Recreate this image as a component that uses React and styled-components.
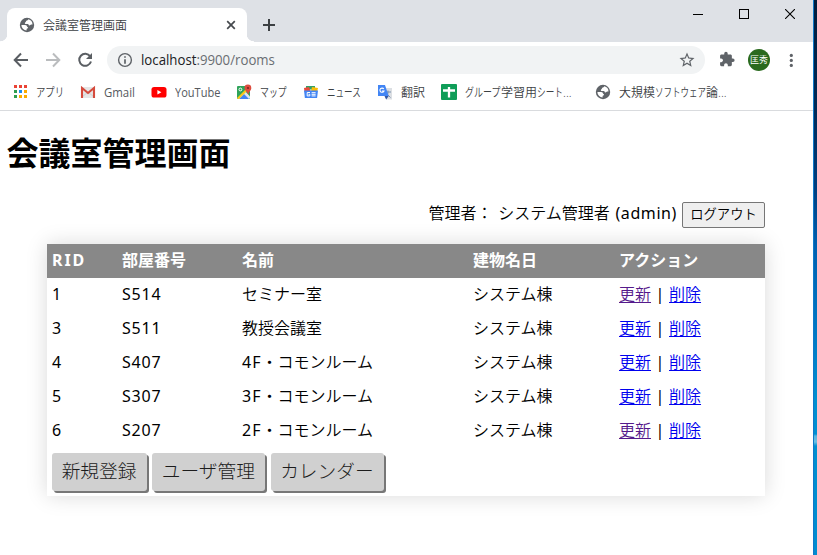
import React from "react";
import styled, { createGlobalStyle } from "styled-components";

const GlobalStyle = createGlobalStyle`
  * { box-sizing: border-box; }
  html, body { margin: 0; padding: 0; overflow: hidden; background: #fff; }
`;

const uiFont = `"Open Sans", "Noto Sans CJK JP", sans-serif`;

const Screen = styled.div`
  display: flex;
  width: 817px;
  height: 555px;
  overflow: hidden;
`;
const Browser = styled.div`
  flex: 1;
  min-width: 0;
  display: flex;
  flex-direction: column;
  background: #fff;
`;
const Desktop = styled.div`
  width: 4px;
  border-left: 1px solid #1078c8;
  background: linear-gradient(#001c3c 0, #002a58 110px, #003f80 190px, #0060b0 245px, #0078c4 330px, #0090d0 400px, #008fd2 434px, #55b5e0 436px, #6cc0e4 442px, #0090d0 446px, #008cd0 100%);
`;
const TabStrip = styled.div`
  height: 42px;
  display: flex;
  align-items: flex-end;
  background: #dee1e6;
`;
const Flare = styled.div`
  width: 7px;
  height: 8px;
  background: radial-gradient(circle at ${(p) => (p.$right ? "100% 0" : "0 0")}, transparent 7px, #fff 7.6px);
`;
const Tab = styled.div`
  width: 240px;
  height: 34px;
  display: flex;
  align-items: center;
  padding: 0 11px 0 12px;
  background: #fff;
  border-radius: 8px 8px 0 0;
`;
const TabTitle = styled.span`
  flex: 1;
  margin-left: 8px;
  padding-top: 2px;
  font: 350 12px/16px ${uiFont};
  color: #3c4043;
`;
const NewTab = styled.div`
  height: 34px;
  display: flex;
  align-items: center;
  margin-left: 8px;
`;
const WindowControls = styled.div`
  align-self: flex-start;
  display: flex;
  gap: 36px;
  margin: 9px 18px 0 auto;
`;
const Toolbar = styled.div`
  height: 36px;
  display: flex;
  align-items: center;
  padding-left: 12px;
`;
const NavIcons = styled.div`
  display: flex;
  gap: 14px;
  width: 95px;
`;
const AddressBar = styled.div`
  width: 598px;
  height: 28px;
  display: flex;
  align-items: center;
  padding: 0 9px 0 9px;
  border-radius: 14px;
  background: #f1f3f4;
`;
const Address = styled.span`
  flex: 1;
  margin-left: 7px;
  font: 14px/20px ${uiFont};
  transform: scaleX(0.945);
  transform-origin: left center;
  color: #6a6e73;
  b { font-weight: 400; color: #202124; }
`;
const ToolbarActions = styled.div`
  display: flex;
  align-items: center;
  margin-left: 13px;
`;
const Avatar = styled.div`
  width: 22px;
  height: 22px;
  display: flex;
  align-items: center;
  justify-content: center;
  margin: 0 13px 0 12px;
  border-radius: 50%;
  background: #2a6a1e;
  color: #fff;
  font: 9px/22px ${uiFont};
`;
const Bookmarks = styled.div`
  height: 33px;
  display: flex;
  align-items: center;
  padding: 0 0 4px 12px;
  border-bottom: 1px solid #d9dbde;
`;
const Bookmark = styled.div`
  width: ${(p) => p.$width}px;
  flex: none;
  display: flex;
  align-items: center;
  gap: 8px;
`;
const BookmarkLabel = styled.span`
  flex: none;
  white-space: nowrap;
  padding-top: 2px;
  font: ${(p) => (p.$latin ? 400 : 350)} 12px/16px ${uiFont};
  color: ${(p) => (p.$latin ? "#55595e" : "#3c4043")};
  transform: scaleX(${(p) => p.$scale || 1});
  transform-origin: left center;
`;
const Narrow = styled.span`
  display: inline-block;
  width: ${(p) => p.$width}px;
  transform: scaleX(${(p) => p.$scale});
  transform-origin: left center;
`;
const Page = styled.main`
  flex: 1;
  font: 350 16px/24px "Noto Sans", "Noto Sans CJK JP", sans-serif;
  color: #000;
`;
const Title = styled.h1`
  margin: 18px 0 0 6.5px;
  font-size: 32px;
  line-height: 48px;
  font-weight: 700;
`;
const Account = styled.div`
  height: 26px;
  display: flex;
  align-items: center;
  justify-content: flex-end;
  gap: 5px;
  margin: 25px 48px 16px 0;
`;
const AccountText = styled.span`
  white-space: pre;
  padding-bottom: 5px;
  word-spacing: 1.5px;
`;
const Latin = styled.span`
  font-weight: 400;
  letter-spacing: ${(p) => p.$spacing}px;
`;
const Logout = styled.button`
  width: 83px;
  height: 26px;
  padding: 0 0 2px;
  border: 1px solid #767676;
  border-radius: 2px;
  background: #efefef;
  color: #000;
  font: 350 13.33px/20px "Noto Sans CJK JP", sans-serif;
  white-space: nowrap;
`;
const Panel = styled.section`
  width: 718px;
  height: 252px;
  margin-left: 47px;
  background: #fff;
  box-shadow: 0 0 20px rgba(0, 0, 0, 0.15);
`;
const Row = styled.div`
  height: 34px;
  display: grid;
  grid-template-columns: 70px 120px 231px 146px 1fr;
  align-items: center;
  padding: 0 0 2px 5px;
  white-space: nowrap;
`;
const HeaderRow = styled(Row)`
  background: #888;
  color: #fff;
  font-weight: 700;
  span { font-weight: 700; }
`;
const Link = styled.a`
  color: ${(p) => (p.$visited ? "#551a8b" : "#0000ee")};
  text-decoration: underline;
  text-underline-offset: 2px;
  text-decoration-thickness: 1px;
`;
const Separator = styled.span`
  display: inline-block;
  width: 18px;
  text-align: center;
  font-weight: 400;
`;
const Footer = styled.div`
  display: flex;
  gap: 5.4px;
  padding: 5px;
`;
const ActionButton = styled.button`
  width: ${(p) => p.$width}px;
  height: 38px;
  padding: 0 1px 4px 0;
  border: 0;
  border-radius: 3px;
  background: #d0d0d0;
  box-shadow: 2px 2px 0 #777;
  color: #1c1c1c;
  font: 300 18.7px/30px "Noto Sans CJK JP", sans-serif;
  white-space: nowrap;
`;

const Globe = () => (
  <svg width="16" height="16" viewBox="0 0 16 16">
    <circle cx="8" cy="8" r="7.2" fill="#5f6368" />
    <path d="M9.2 2.3c-.2 1.2-1 1.2-1.8 1.5-.6.3-.2 1.1-.9 1.4-.8.3-.9 1.5 0 1.7l2.4.1c.8.2.6 1.4 1.5 1.5.9.1 1-.9 1.8-.9h1.3a5.5 5.5 0 0 0-4.3-5.3zM2.4 7.9h3.7c1.4 0 1.9.8 1.9 1.7 0 .5 1 .3 1 1.1 0 .9-1.4.7-1.4 1.4v1.4a5.6 5.6 0 0 1-5.2-5.6z" fill="#fff" />
  </svg>
);
const Back = ({ forward }) => (
  <svg width="18" height="18" viewBox="0 0 18 18" fill="none" stroke={forward ? "#babcbe" : "#5a5e63"} strokeWidth="2">
    <path d={forward ? "M2 9h13M9 2.5 15.3 9 9 15.5" : "M16 9H3M9 2.5 2.7 9 9 15.5"} />
  </svg>
);
const Reload = () => (
  <svg width="18" height="18" viewBox="0 0 18 18">
    <path d="M14.2 5.4A6 6 0 1 0 15 10.5" fill="none" stroke="#5a5e63" strokeWidth="2" />
    <path d="M16 2v6h-6z" fill="#5a5e63" />
  </svg>
);
const Info = () => (
  <svg width="18" height="18" viewBox="0 0 18 18">
    <circle cx="9" cy="9" r="6.4" fill="none" stroke="#5f6368" strokeWidth="1.4" />
    <path d="M9 5.2v1.6M9 8.2v4.6" stroke="#5f6368" strokeWidth="1.7" />
  </svg>
);
const Star = () => (
  <svg width="18" height="18" viewBox="0 0 24 24" fill="#5f6368">
    <path d="m22 9.24-7.19-.62L12 2 9.19 8.63 2 9.24l5.46 4.73L5.82 21 12 17.27 18.18 21l-1.63-7.03L22 9.24zM12 15.4l-3.76 2.27 1-4.28-3.32-2.88 4.38-.38L12 6.1l1.71 4.04 4.38.38-3.32 2.88 1 4.28L12 15.4z" />
  </svg>
);
const Puzzle = () => (
  <svg width="18" height="18" viewBox="-1 0 26 26" fill="#5f6368">
    <path d="M20.5 11H19V7c0-1.1-.9-2-2-2h-4V3.5a2.5 2.5 0 0 0-5 0V5H4c-1.1 0-1.99.9-1.99 2v3.8H3.5c1.49 0 2.7 1.21 2.7 2.7s-1.21 2.7-2.7 2.7H2V20c0 1.1.9 2 2 2h3.8v-1.5c0-1.49 1.21-2.7 2.7-2.7s2.7 1.21 2.7 2.7V22H17c1.1 0 2-.9 2-2v-4h1.5a2.5 2.5 0 0 0 0-5z" />
  </svg>
);
const Dots = () => (
  <svg width="16" height="16" viewBox="0 0 16 16" fill="#5f6368">
    <circle cx="8.3" cy="3.4" r="1.6" /><circle cx="8.3" cy="8.4" r="1.6" /><circle cx="8.3" cy="13.4" r="1.6" />
  </svg>
);
const dotColors = ["#ea4335", "#ea4335", "#ea4335", "#2e9e50", "#1a8cf0", "#fbab00", "#2e9e50", "#fbab00", "#fbab00"];
const Apps = () => (
  <svg width="16" height="16" viewBox="0 0 16 16">
    {dotColors.map((c, i) => <rect key={i} x={2 + (i % 3) * 5} y={1 + Math.floor(i / 3) * 5} width="3" height="3" fill={c} />)}
  </svg>
);
const Gmail = () => (
  <svg width="16" height="16" viewBox="0 0 16 16">
    <path d="M1 3h14v11H1z" fill="#e6e6e6" />
    <path d="m2 13 6-5 6 5" fill="none" stroke="#cfcfcf" />
    <path d="M2 14V4l6 5 6-5v10" fill="none" stroke="#d54b3d" strokeWidth="2.1" />
  </svg>
);
const YouTube = () => (
  <svg width="16" height="16" viewBox="0 0 16 16">
    <rect x="0.5" y="3" width="15" height="10.5" rx="2.6" fill="#f00" />
    <path d="m6.4 6 4 2.2-4 2.3z" fill="#fff" />
  </svg>
);
const Maps = () => (
  <svg width="16" height="16" viewBox="0 0 16 16">
    <rect x="1" y="2" width="13" height="13" rx="1" fill="#2fa35a" />
    <path d="M1.5 15 9 7l5 5.5V14l-1 1z" fill="#dfe5e8" />
    <path d="m3 15 5-5 5 5z" fill="#4285f4" />
    <path d="m1 14 8.5-8.5L11 7l-8 8H2z" fill="#fbc916" />
    <circle cx="4.4" cy="5.5" r="1.4" fill="none" stroke="#fff" />
    <path d="M8.5 4a3.3 3.3 0 0 1 6.8 0c0 2.6-2.7 3.5-3.1 7-.5-3.5-3.7-4.4-3.7-7z" fill="#dd4b3e" />
    <circle cx="12" cy="4" r="1.1" fill="#7d2720" />
  </svg>
);
const News = () => (
  <svg width="16" height="16" viewBox="0 0 16 16">
    <path d="M3 5V2h9v4z" fill="#34a067" />
    <path d="m1 4 5-1 2 5H1.5z" fill="#e84a3c" />
    <path d="m9 3 6 1-1 4H8z" fill="#fbbc05" />
    <path d="M1 6.5h14l-.9 7.5H1.9z" fill="#4285f4" />
    <path d="M7 8.5H4.2v3.4h2.6v-1.6H5.5M8.6 8.7h4M8.6 10.3h4M8.6 11.9h4" fill="none" stroke="#fff" />
  </svg>
);
const Translate = () => (
  <svg width="16" height="16" viewBox="0 0 16 16">
    <path d="M6 4h9v11.5H9z" fill="#dcdfe3" />
    <path d="M8 8h6M11 6.5V8c0 3-1 4-2.5 5M9 9l4.5 4.5" fill="none" stroke="#7890ad" />
    <path d="M1 1h7l3.7 11H1z" fill="#4285f4" />
    <path d="m7.5 12 4.2 0-2.5 3.5z" fill="#3056a5" />
    <path d="M6.8 5A2.1 2.1 0 1 0 7 7H5" fill="none" stroke="#fff" strokeWidth="1.1" />
  </svg>
);
const Sheets = () => (
  <svg width="16" height="16" viewBox="0 0 16 16">
    <rect width="16" height="16" rx="1" fill="#0f9d58" />
    <path d="M2 6.5h12M8 3v10.5" stroke="#fff" strokeWidth="2.3" />
  </svg>
);

const bookmarks = [
  { icon: Apps, label: "アプリ", width: 68, scale: 0.78 },
  { icon: Gmail, label: "Gmail", width: 71, scale: 0.95, latin: true },
  { icon: YouTube, label: "YouTube", width: 85, scale: 0.92, latin: true },
  { icon: Maps, label: "マップ", width: 67, scale: 0.74 },
  { icon: News, label: "ニュース", width: 74, scale: 0.71 },
  { icon: Translate, label: "翻訳", width: 64, scale: 1 },
  { icon: Sheets, width: 154, label: <><Narrow $width={36} $scale={0.75}>グループ</Narrow>学習用<Narrow $width={26} $scale={0.72}>シート</Narrow>...</> },
  { icon: Globe, width: 150, label: <>大規模<Narrow $width={51} $scale={0.71}>ソフトウェア</Narrow>論...</> },
];
const rooms = [
  { id: 1, code: "S514", name: "セミナー室", visited: true },
  { id: 3, code: "S511", name: "教授会議室" },
  { id: 4, code: "S407", floor: "4F", name: "・コモンルーム" },
  { id: 5, code: "S307", floor: "3F", name: "・コモンルーム" },
  { id: 6, code: "S207", floor: "2F", name: "・コモンルーム", visited: true },
];

export default function App() {
  return (
    <Screen>
      <GlobalStyle />
      <Browser>
        <TabStrip>
          <Flare />
          <Tab>
            <Globe />
            <TabTitle>会議室管理画面</TabTitle>
            <svg width="10" height="10" viewBox="0 0 10 10"><path d="m1.2 1.2 7.6 7.6m0-7.6L1.2 8.8" stroke="#45494d" strokeWidth="1.7" /></svg>
          </Tab>
          <Flare $right />
          <NewTab>
            <svg width="14" height="14" viewBox="0 0 14 14"><path d="M7 1v12M1 7h12" stroke="#3c4043" strokeWidth="2" /></svg>
          </NewTab>
          <WindowControls>
            <svg width="10" height="10"><path d="M0 5.5h10" stroke="#000" /></svg>
            <svg width="10" height="10"><rect x=".5" y=".5" width="9" height="9" fill="none" stroke="#000" /></svg>
            <svg width="10" height="10"><path d="m0 0 10 10M10 0 0 10" stroke="#000" strokeWidth="1.1" /></svg>
          </WindowControls>
        </TabStrip>
        <Toolbar>
          <NavIcons><Back /><Back forward /><Reload /></NavIcons>
          <AddressBar>
            <Info />
            <Address><b>localhost</b>:9900/rooms</Address>
            <Star />
          </AddressBar>
          <ToolbarActions>
            <Puzzle />
            <Avatar>匡秀</Avatar>
            <Dots />
          </ToolbarActions>
        </Toolbar>
        <Bookmarks>
          {bookmarks.map(({ icon: Icon, label, width, scale, latin }, i) => (
            <Bookmark key={i} $width={width}>
              <Icon />
              <BookmarkLabel $scale={scale} $latin={latin}>{label}</BookmarkLabel>
            </Bookmark>
          ))}
        </Bookmarks>
        <Page>
          <Title>会議室管理画面</Title>
          <Account>
            <AccountText>管理者： システム管理者 <Latin $spacing={0.6}>(admin)</Latin></AccountText>
            <Logout>ログアウト</Logout>
          </Account>
          <Panel>
            <HeaderRow>
              <Latin $spacing={1.9}>RID</Latin><span>部屋番号</span><span>名前</span><span>建物名日</span><span>アクション</span>
            </HeaderRow>
            {rooms.map((r) => (
              <Row key={r.id}>
                <Latin $spacing={0}>{r.id}</Latin>
                <Latin $spacing={0.8}>{r.code}</Latin>
                <span><Latin $spacing={1}>{r.floor}</Latin>{r.name}</span>
                <span>システム棟</span>
                <span><Link $visited={r.visited}>更新</Link><Separator>|</Separator><Link>削除</Link></span>
              </Row>
            ))}
            <Footer>
              <ActionButton $width={95}>新規登録</ActionButton>
              <ActionButton $width={113}>ユーザ管理</ActionButton>
              <ActionButton $width={113.2}>カレンダー</ActionButton>
            </Footer>
          </Panel>
        </Page>
      </Browser>
      <Desktop />
    </Screen>
  );
}
